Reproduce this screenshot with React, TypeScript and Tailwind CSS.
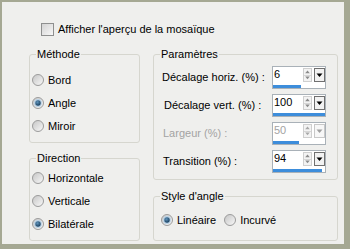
import React from 'react'

function Radio({ checked }: { checked?: boolean }) {
  return (
    <svg width="12" height="12" viewBox="0 0 12 12" className="shrink-0">
      <defs>
        <linearGradient id="radioFill" x1="0" y1="0" x2="1" y2="1">
          <stop offset="0" stopColor="#c4c4c4" />
          <stop offset="1" stopColor="#fafafa" />
        </linearGradient>
        <radialGradient id="radioDot" cx="0.4" cy="0.35" r="0.7">
          <stop offset="0" stopColor="#5f93bb" />
          <stop offset="1" stopColor="#153a59" />
        </radialGradient>
      </defs>
      <circle cx="6" cy="6" r="5.5" fill="url(#radioFill)" stroke="#9b9b9b" />
      {checked && (
        <>
          <circle cx="6" cy="6" r="3.9" fill="#b9d2e6" />
          <circle cx="6" cy="6" r="2.7" fill="url(#radioDot)" />
        </>
      )}
    </svg>
  )
}

function RadioRow({ label, checked }: { label: string; checked?: boolean }) {
  return (
    <div className="flex h-[14px] items-center gap-[4px]">
      <Radio checked={checked} />
      <span>{label}</span>
    </div>
  )
}

function Group({ title, className, children }: { title: string; className: string; children: React.ReactNode }) {
  return (
    <fieldset className={`rounded-[3px] border border-[#d6d6cf] ${className}`}>
      <legend className="ml-[6px] px-[1px] text-[11px] leading-[13px]">{title}</legend>
      {children}
    </fieldset>
  )
}

function Spinner({ value, pct, disabled }: { value: string; pct: number; disabled?: boolean }) {
  const arrow = disabled ? '#a8a8a8' : '#8a8a8a'
  return (
    <div className="flex h-[23px] w-[54px] flex-col border border-[#a9b1b8] bg-white">
      <div className="flex h-[18px] items-start">
        <span className={`flex-1 pl-[1px] pt-[1px] leading-[13px] ${disabled ? 'text-[#a3a3a3]' : 'text-black'}`}>
          {value}
        </span>
        <div className="mt-[1px] flex h-[14px] w-[9px] flex-col border border-[#cfcfcf] bg-[#f3f3f3]">
          <svg width="7" height="6" viewBox="0 0 7 6">
            <path d="M1 4.5 L3.5 1.5 L6 4.5 Z" fill={arrow} />
          </svg>
          <div className="h-px bg-[#d6d6d6]" />
          <svg width="7" height="6" viewBox="0 0 7 6">
            <path d="M1 1.5 L3.5 4.5 L6 1.5 Z" fill={arrow} />
          </svg>
        </div>
        <div
          className={`ml-[2px] mt-[1px] flex h-[14px] w-[11px] items-center justify-center border ${
            disabled ? 'border-[#c8c8c8] bg-[#f7f7f7]' : 'border-[#707070] bg-[#f2f2f2]'
          }`}
        >
          <svg width="7" height="5" viewBox="0 0 7 5">
            <path d="M0.5 0.5 L6.5 0.5 L3.5 4 Z" fill={disabled ? '#a0a0a0' : '#000'} />
          </svg>
        </div>
      </div>
      <div className="h-[3px]">
        <div className="h-full bg-[#3d8ddb]" style={{ width: `${pct}%` }} />
      </div>
    </div>
  )
}

function ParamRow({ label, indent, children, disabled }: { label: string; indent: string; children: React.ReactNode; disabled?: boolean }) {
  return (
    <div className="flex h-[23px] items-center">
      <span className={`w-[118px] ${indent} ${disabled ? 'text-[#a3a3a3]' : 'text-black'}`}>{label}</span>
      {children}
    </div>
  )
}

export default function App() {
  return (
    <div className="h-[249px] w-[350px] bg-[#a5a893] pb-[5px] pl-[2px] pr-[6px] pt-[2px] font-['Liberation_Sans',Arial,sans-serif] text-[11px] leading-[13px] text-black">
      <div className="flex h-full flex-col bg-[#efefed] pt-[21px]">
        {/* Preview toggle */}
        <div className="flex h-[13px] items-center gap-[4px] pl-[39px]">
          <div className="h-[13px] w-[13px] border border-[#8e8f8f] bg-gradient-to-br from-[#d3d3d3] to-[#f8f8f8]" />
          <span>Afficher l'aperçu de la mosaïque</span>
        </div>

        <div className="mt-[12px] flex gap-[13px] pl-[27px]">
          {/* Left column */}
          <div className="flex w-[111px] flex-col gap-[9px]">
            <Group title="Méthode" className="h-[95px]">
              <div className="flex flex-col gap-[9px] pl-[2px] pt-[12px]">
                <RadioRow label="Bord" />
                <RadioRow label="Angle" checked />
                <RadioRow label="Miroir" />
              </div>
            </Group>
            <Group title="Direction" className="h-[89px]">
              <div className="flex flex-col gap-[9px] pl-[2px] pt-[6px]">
                <RadioRow label="Horizontale" />
                <RadioRow label="Verticale" />
                <RadioRow label="Bilatérale" checked />
              </div>
            </Group>
          </div>

          {/* Right column */}
          <div className="flex w-[185px] flex-col gap-[10px]">
            <Group title="Paramètres" className="h-[132px]">
              <div className="flex flex-col gap-[5px] pt-[5px]">
                <ParamRow label="Décalage horiz. (%) :" indent="pl-[8px]">
                  <Spinner value="6" pct={53} />
                </ParamRow>
                <ParamRow label="Décalage vert. (%) :" indent="pl-[10px]">
                  <Spinner value="100" pct={100} />
                </ParamRow>
                <ParamRow label="Largeur (%) :" indent="pl-[9px]" disabled>
                  <Spinner value="50" pct={50} disabled />
                </ParamRow>
                <ParamRow label="Transition (%) :" indent="pl-[9px]">
                  <Spinner value="94" pct={94} />
                </ParamRow>
              </div>
            </Group>
            <Group title="Style d'angle" className="h-[51px]">
              <div className="flex items-center pl-[7px] pt-[10px]">
                <RadioRow label="Linéaire" checked />
                <div className="ml-[8px]">
                  <RadioRow label="Incurvé" />
                </div>
              </div>
            </Group>
          </div>
        </div>
      </div>
    </div>
  )
}
